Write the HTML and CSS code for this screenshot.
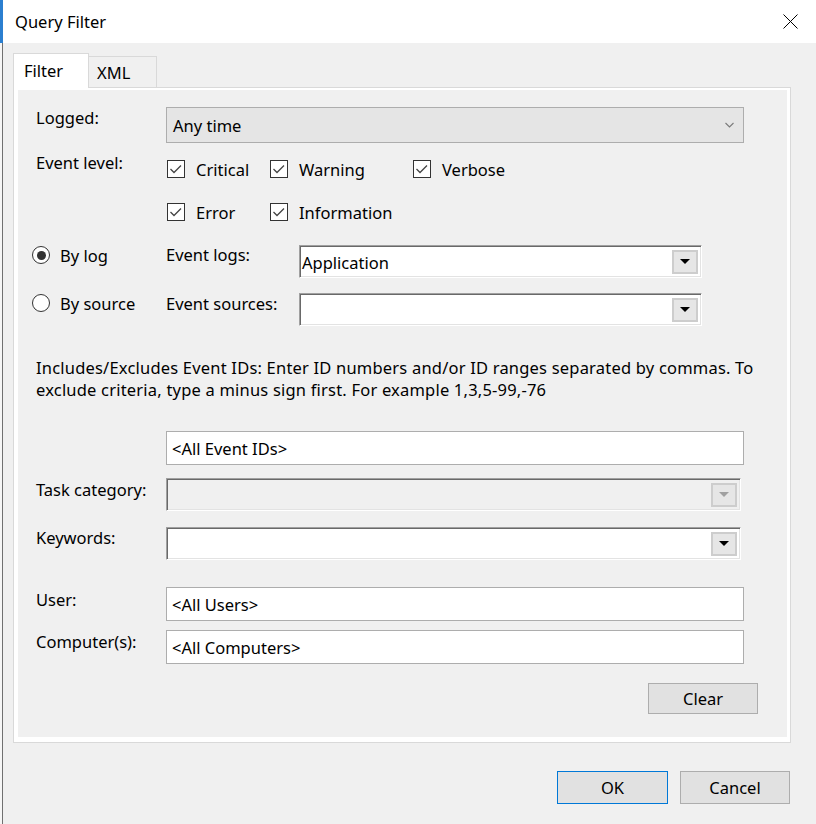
FILE: index.html
```html
<!DOCTYPE html>
<html lang="en">
<head>
    <meta charset="UTF-8">
    <meta name="viewport" content="width=device-width, initial-scale=1.0">
    <title>Query Filter</title>
    <link rel="stylesheet" href="styles.css">
</head>
<body>
    <div class="window">
        <div class="titlebar">
            <span class="title">Query Filter</span>
            <span class="close">
                <svg width="15" height="15" viewBox="0 0 15 15"><path d="M0.5 0.5 L14.5 14.5 M14.5 0.5 L0.5 14.5" stroke="#000" stroke-width="1" fill="none"/></svg>
            </span>
        </div>

        <div class="content">
            <div class="tabs">
                <div class="tab active">Filter</div>
                <div class="tab">XML</div>
            </div>

            <div class="panel">
                <div class="panel-inner">
                    <!-- time range -->
                    <div class="field logged">
                        <span class="lbl">Logged:</span>
                        <div class="select">
                            <span>Any time</span>
                            <svg class="chevron" width="9" height="6" viewBox="0 0 9 6"><path d="M0.5 1 L4.5 5 L8.5 1" stroke="#7a7a7a" stroke-width="1.1" fill="none"/></svg>
                        </div>
                    </div>

                    <!-- event levels -->
                    <div class="field levels">
                        <span class="lbl">Event level:</span>
                        <div class="checks">
                            <label class="check"><span class="box"><svg width="16" height="16" viewBox="0 0 16 16"><path d="M2.5 8 L6 11.5 L13 4.5" stroke="#444" stroke-width="1.3" fill="none"/></svg></span>Critical</label>
                            <label class="check"><span class="box"><svg width="16" height="16" viewBox="0 0 16 16"><path d="M2.5 8 L6 11.5 L13 4.5" stroke="#444" stroke-width="1.3" fill="none"/></svg></span>Warning</label>
                            <label class="check"><span class="box"><svg width="16" height="16" viewBox="0 0 16 16"><path d="M2.5 8 L6 11.5 L13 4.5" stroke="#444" stroke-width="1.3" fill="none"/></svg></span>Verbose</label>
                            <label class="check"><span class="box"><svg width="16" height="16" viewBox="0 0 16 16"><path d="M2.5 8 L6 11.5 L13 4.5" stroke="#444" stroke-width="1.3" fill="none"/></svg></span>Error</label>
                            <label class="check"><span class="box"><svg width="16" height="16" viewBox="0 0 16 16"><path d="M2.5 8 L6 11.5 L13 4.5" stroke="#444" stroke-width="1.3" fill="none"/></svg></span>Information</label>
                        </div>
                    </div>

                    <!-- by log / by source -->
                    <div class="field source logs">
                        <label class="radio"><span class="dot on"></span>By log</label>
                        <span class="lbl2">Event logs:</span>
                        <div class="combo narrow">
                            <span class="combo-text">Application</span>
                            <span class="drop"><svg width="10" height="6" viewBox="0 0 10 6"><path d="M0 0 H10 L5 5 Z" fill="#000"/></svg></span>
                        </div>
                    </div>
                    <div class="field source sources">
                        <label class="radio"><span class="dot"></span>By source</label>
                        <span class="lbl2">Event sources:</span>
                        <div class="combo narrow">
                            <span class="combo-text"></span>
                            <span class="drop"><svg width="10" height="6" viewBox="0 0 10 6"><path d="M0 0 H10 L5 5 Z" fill="#000"/></svg></span>
                        </div>
                    </div>

                    <p class="hint">Includes/Excludes Event IDs: Enter ID numbers and/or ID ranges separated by commas. To exclude criteria, type a minus sign first. For example 1,3,5-99,-76</p>

                    <div class="field ids">
                        <span class="lbl"></span>
                        <div class="textbox">&lt;All Event IDs&gt;</div>
                    </div>

                    <div class="field task">
                        <span class="lbl">Task category:</span>
                        <div class="combo wide disabled">
                            <span class="combo-text"></span>
                            <span class="drop"><svg width="10" height="6" viewBox="0 0 10 6"><path d="M0 0 H10 L5 5 Z" fill="#a0a0a0"/></svg></span>
                        </div>
                    </div>

                    <div class="field keywords">
                        <span class="lbl">Keywords:</span>
                        <div class="combo wide">
                            <span class="combo-text"></span>
                            <span class="drop"><svg width="10" height="6" viewBox="0 0 10 6"><path d="M0 0 H10 L5 5 Z" fill="#000"/></svg></span>
                        </div>
                    </div>

                    <div class="field user">
                        <span class="lbl">User:</span>
                        <div class="textbox">&lt;All Users&gt;</div>
                    </div>
                    <div class="field computers">
                        <span class="lbl">Computer(s):</span>
                        <div class="textbox">&lt;All Computers&gt;</div>
                    </div>

                    <div class="clear-row">
                        <button class="btn clear">Clear</button>
                    </div>
                </div>
            </div>

            <div class="actions">
                <button class="btn ok">OK</button>
                <button class="btn">Cancel</button>
            </div>
        </div>
    </div>
</body>
</html>
```

FILE: styles.css
```css
* {
    box-sizing: border-box;
}
body {
    margin: 0;
    font-family: "Noto Sans", "Open Sans", sans-serif;
    font-size: 16.5px;
    color: #000;
    background: linear-gradient(#2b7fd0 0 43px, #f6f6f6 43px);
}
.window {
    margin-left: 3px;
    height: 824px;
    display: flex;
    flex-direction: column;
    background: #f0f0f0;
}
.titlebar {
    height: 43px;
    flex: none;
    background: #fff;
    display: flex;
    align-items: center;
    justify-content: space-between;
    padding: 0 18px 0 12px;
}
.close {
    display: flex;
}
.content {
    flex: 1;
    margin-left: -1px;
    border-left: 1px solid #707070;
    padding: 10px 25px 0 10px;
}

/* tabs */
.tabs {
    display: flex;
    align-items: flex-end;
    height: 35px;
    position: relative;
    z-index: 1;
    margin-bottom: -1px;
}
.tab {
    height: 31px;
    margin-bottom: 1px;
    padding: 0 8px;
    width: 68px;
    display: flex;
    align-items: center;
    border: 1px solid #d9d9d9;
    border-bottom: none;
    border-left: none;
    background: #f0f0f0;
}
.tab.active {
    height: 35px;
    margin-bottom: 0;
    width: 76px;
    padding: 0 10px 2px;
    background: #fff;
    border-left: 1px solid #d9d9d9;
}

/* panel */
.panel {
    width: 778px;
    border: 1px solid #d9d9d9;
    background: #fff;
    padding: 2px 3px 5px 4px;
}
.panel-inner {
    background: #f0f0f0;
    height: 647px;
    padding: 17px 43px 0 18px;
}
.field {
    display: flex;
    align-items: flex-start;
}
.lbl {
    width: 130px;
    flex: none;
    line-height: 22px;
}
.lbl2 {
    width: 133px;
    flex: none;
    line-height: 22px;
}

/* modern dropdown */
.select {
    flex: 1;
    height: 36px;
    background: #e5e5e5;
    border: 1px solid #adadad;
    padding: 0 9px 0 6px;
    display: flex;
    align-items: center;
    justify-content: space-between;
}

/* checkboxes */
.levels {
    margin-top: 9px;
}
.checks {
    display: grid;
    grid-template-columns: 103px 143px auto;
    grid-auto-rows: 22px;
    row-gap: 21px;
    padding: 6px 0 0 1px;
}
.check {
    display: flex;
    align-items: center;
    gap: 11px;
}
.box {
    width: 18px;
    height: 18px;
    border: 1px solid #333;
    background: #fff;
    display: flex;
}

/* radio rows */
.source {
    height: 33px;
}
.logs {
    margin-top: 22px;
}
.logs .radio, .logs .lbl2 {
    margin-top: -1px;
}
.sources {
    margin-top: 15px;
}
.sources .radio {
    margin-top: -1px;
}
.radio {
    width: 134px;
    margin-left: -4px;
    flex: none;
    display: flex;
    align-items: center;
    gap: 10px;
    height: 22px;
}
.dot {
    width: 18px;
    height: 18px;
    border: 1px solid #333;
    border-radius: 50%;
    background: #fff;
    display: flex;
    align-items: center;
    justify-content: center;
}
.dot.on::after {
    content: "";
    width: 9px;
    height: 9px;
    border-radius: 50%;
    background: #333;
}

/* classic sunken combo */
.combo {
    height: 33px;
    background: #fff;
    border-top: 1px solid #a0a0a0;
    border-left: 1px solid #a0a0a0;
    border-right: 1px solid #fff;
    border-bottom: 1px solid #fff;
    box-shadow: inset 1px 1px 0 #696969, inset -1px -1px 0 #e3e3e3;
    display: flex;
    align-items: center;
    justify-content: space-between;
    padding: 1px 3px 0 2px;
}
.combo.narrow {
    width: 403px;
}
.combo.wide {
    width: 575px;
}
.combo.disabled {
    background: #f0f0f0;
}
.drop {
    width: 26px;
    height: 24px;
    background: #e6e6e6;
    border: 2px solid #cdcdcd;
    display: flex;
    align-items: center;
    justify-content: center;
}

.hint {
    margin: 31px -40px 0 0;
    line-height: 22px;
    letter-spacing: 0.2px;
}

/* text boxes */
.textbox {
    flex: 1;
    height: 34px;
    background: #fff;
    border: 1px solid #adadad;
    padding-left: 5px;
    display: flex;
    align-items: center;
}
.ids {
    margin-top: 30px;
}
.task {
    margin-top: 13px;
}
.task .lbl {
    padding-top: 1px;
}
.keywords {
    margin-top: 16px;
}
.user {
    margin-top: 27px;
}
.user .lbl {
    padding-top: 2px;
}
.computers {
    margin-top: 9px;
}
.computers .lbl {
    padding-top: 1px;
}

/* buttons */
.clear-row {
    display: flex;
    justify-content: flex-end;
    margin: 19px -14px 0 0;
}
.btn {
    font: inherit;
    color: #000;
    background: #e1e1e1;
    border: 1px solid #adadad;
    height: 33px;
    width: 110px;
    padding: 0;
}
.btn.clear {
    height: 31px;
}
.actions {
    display: flex;
    justify-content: flex-end;
    gap: 12px;
    margin-top: 28px;
    padding-right: 1px;
}
.btn.ok {
    width: 111px;
    border-color: #0078d7;
}
```
